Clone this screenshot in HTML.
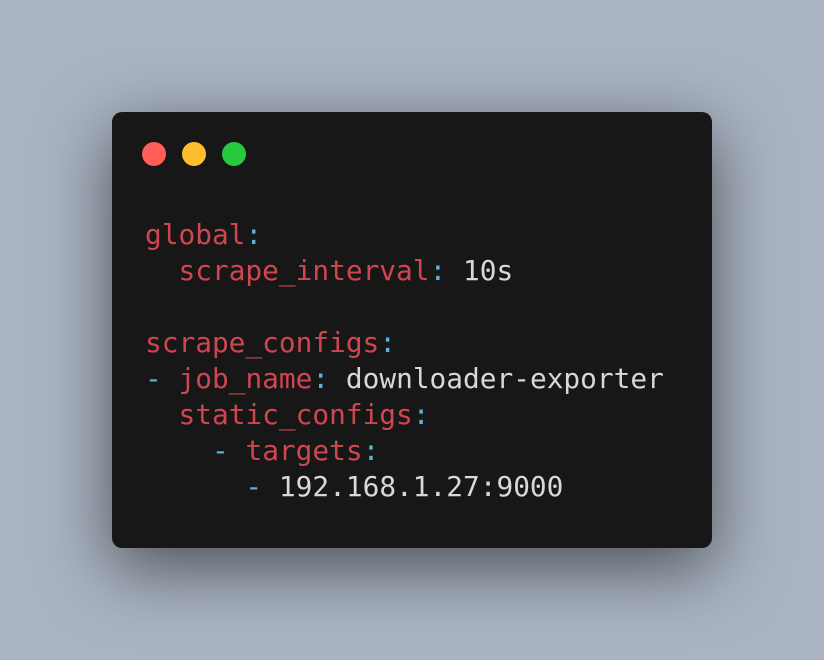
<!DOCTYPE html>
<html><head><meta charset="utf-8"><style>
html,body{margin:0;padding:0;width:824px;height:660px;background:#a9b3c1;overflow:hidden}
.win{position:absolute;left:112px;top:112px;width:600px;height:436px;background:#171717;border-radius:10px;box-shadow:0 20px 68px rgba(0,0,0,0.55)}
.dot{position:absolute;top:30px;width:24px;height:24px;border-radius:50%}
pre{position:absolute;left:33px;top:105px;margin:0;font-family:"DejaVu Sans Mono","Liberation Mono",monospace;font-size:27.8px;line-height:36px;color:#d8d8d8}
.k{color:#cf4550}.p{color:#5bb3d6}
</style></head><body>
<div class="win">
<div class="dot" style="left:30px;background:#ff5f56"></div>
<div class="dot" style="left:70px;background:#ffbd2e"></div>
<div class="dot" style="left:110px;background:#27c93f"></div>
<pre><span class="k">global</span><span class="p">:</span>
  <span class="k">scrape_interval</span><span class="p">:</span> 10s

<span class="k">scrape_configs</span><span class="p">:</span>
<span class="p">-</span> <span class="k">job_name</span><span class="p">:</span> downloader-exporter
  <span class="k">static_configs</span><span class="p">:</span>
    <span class="p">-</span> <span class="k">targets</span><span class="p">:</span>
      <span class="p">-</span> 192.168.1.27:9000</pre>
</div>
</body></html>
